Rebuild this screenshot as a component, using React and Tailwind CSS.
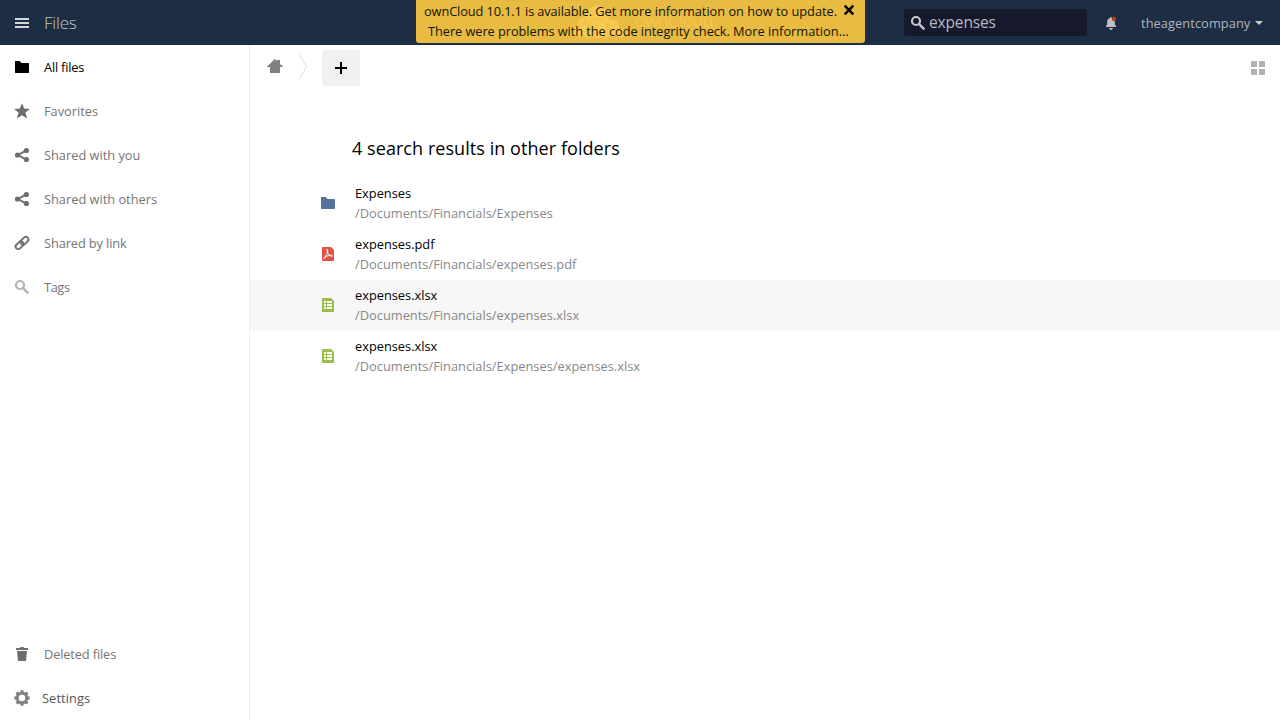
import React from "react";

const Icon = ({ className = "", children }) => (
  <svg viewBox="0 0 16 16" width="16" height="16" className={`block shrink-0 ${className}`}>
    {children}
  </svg>
);

const Folder = ({ className }) => (
  <Icon className={className}>
    <path fill="currentColor" d="M1.4 2h4.3l1.8 2h7.1q.4 0 .4.4v9.2q0 .4-.4.4H1.4q-.4 0-.4-.4V2.4q0-.4.4-.4z" />
  </Icon>
);

const Star = () => (
  <Icon className="text-[#6e6e6e]">
    <path fill="currentColor" d="M8 .3l2.200 5.300 5.800.3-4.600 3.700 1.800 5.900L8 12.200l-5.200 3.300 1.800-5.900L0 5.900l5.800-.3z" />
  </Icon>
);

const Share = () => (
  <Icon className="text-[#6e6e6e]">
    <path d="M12.300 3.400L4 8l8.300 4.600" fill="none" stroke="currentColor" strokeWidth="2" />
    <circle cx="3.500" cy="8" r="2.600" fill="currentColor" />
    <circle cx="12.400" cy="3.500" r="2.600" fill="currentColor" />
    <circle cx="12.400" cy="12.500" r="2.600" fill="currentColor" />
  </Icon>
);

const Link = () => (
  <Icon className="text-[#6e6e6e]">
    <g fill="none" stroke="currentColor" strokeWidth="1.900">
      <rect x="6.100" y="3.100" width="8.800" height="5.200" rx="2.600" transform="rotate(-45 10.500 5.700)" />
      <rect x="1.100" y="7.700" width="8.800" height="5.200" rx="2.600" transform="rotate(-45 5.500 10.300)" />
    </g>
  </Icon>
);

const Search = ({ className }) => (
  <Icon className={className}>
    <circle cx="6" cy="6" r="4" fill="none" stroke="currentColor" strokeWidth="2.200" />
    <path d="M8.800 8.800l5.500 5.500" stroke="currentColor" strokeWidth="2.500" />
  </Icon>
);

const Trash = () => (
  <Icon className="text-[#6e6e6e]">
    <path fill="currentColor" d="M6.500 1h3l.6 1h3.400q.5 0 .5.5V4H2V2.500q0-.5.500-.5h3.400zM3 5h10l-.9 9.200q-.1.800-.9.800H4.800q-.8 0-.9-.800z" />
  </Icon>
);

const Gear = () => (
  <Icon className="text-[#808080]">
    <g fill="currentColor">
      <path fillRule="evenodd" d="M8 1.800a6.200 6.200 0 1 1 0 12.400A6.200 6.200 0 0 1 8 1.800zm0 2.900a3.300 3.300 0 1 0 0 6.600 3.300 3.300 0 0 0 0-6.600z" />
      {[0, 45, 90, 135, 180, 225, 270, 315].map((a) => (
        <path key={a} d="M6.500.3h3l.3 2.500H6.200z" transform={`rotate(${a} 8 8)`} />
      ))}
    </g>
  </Icon>
);

const Home = () => (
  <Icon className="text-[#808080]">
    <path fill="currentColor" d="M8 1L0 8.500V9h3v6h10V9h3v-.5L13 6V2h-3v1z" />
  </Icon>
);

const Pdf = () => (
  <Icon>
    <path fill="#de5449" d="M2.400 1h8.600l3 3v10.600q0 .4-.4.4H2.400q-.4 0-.4-.4V1.400q0-.4.4-.4z" />
    <path fill="none" stroke="#fff" strokeWidth="1" d="M7.200 3.400c1 .4.600 2.500-.5 5C5.500 11 4.200 13 3.700 12.600c-.6-.6 1.800-2.200 4.600-2.900s4.200-.4 4.100.3c-.1.800-2-.1-3.400-1.400C7.400 7 6.300 3.600 7.200 3.400z" />
  </Icon>
);

const Sheet = () => (
  <Icon>
    <path fill="#9abd4e" d="M2.400 1H11l3 3v10.600q0 .4-.4.4H2.400q-.4 0-.4-.4V1.400q0-.4.4-.4z" />
    <path fill="#fff" d="M4 4h2v2H4zM7 4h5v2H7zM4 7h2v2H4zM7 7h5v2H7zM4 10h2v2H4zM7 10h5v2H7z" />
  </Icon>
);

const nav = [
  ["All files", <Folder className="text-black" />, "text-black tracking-[-0.2px]"],
  ["Favorites", <Star />, "text-[#757575]"],
  ["Shared with you", <Share />, "text-[#757575]"],
  ["Shared with others", <Share />, "text-[#757575]"],
  ["Shared by link", <Link />, "text-[#757575] tracking-[-0.1px]"],
  ["Tags", <Search className="text-[#b2b2b2]" />, "text-[#757575] tracking-[-0.4px]"],
];

const results = [
  ["Expenses", "/Documents/Financials/Expenses", <Folder className="text-[#54729b]" />, ""],
  ["expenses.pdf", "/Documents/Financials/expenses.pdf", <Pdf />, ""],
  ["expenses.xlsx", "/Documents/Financials/expenses.xlsx", <Sheet />, "bg-[#f7f7f7]"],
  ["expenses.xlsx", "/Documents/Financials/Expenses/expenses.xlsx", <Sheet />, ""],
];

function NavItem({ label, icon, color }) {
  return (
    <li className={`flex h-11 items-center gap-3.5 pl-3.5 ${color}`}>
      {icon}
      <span>{label}</span>
    </li>
  );
}

function Header() {
  return (
    <header className="relative flex h-[45px] shrink-0 items-center justify-between bg-[#1d2d44]">
      <div className="flex items-center gap-3.5 pl-3.5">
        <Icon className="text-[#d2d6da]">
          <path fill="currentColor" d="M1 3h14v2H1zM1 7h14v2H1zM1 11h14v2H1z" />
        </Icon>
        <span className="text-[17px] leading-6 font-light tracking-[-0.2px] text-[#c0c5cc]">Files</span>
      </div>

      <div className="flex items-center">
        <div className="flex h-[27px] w-[183px] items-center gap-[3px] rounded-[3px] bg-[#15192b] pl-1.5">
          <Search className="text-[#c4c6cc]" />
          <span className="-mt-0.5 text-[15.5px] leading-5 tracking-[-0.15px] text-[#b7b9c0]">expenses</span>
        </div>
        <svg viewBox="0 0 16 16" width="16" height="16" className="ml-4 block">
          <path fill="#bbc0c7" d="M8 2q.8 0 .800.900 3 .700 3 4.200v2q0 .900 1.200 1.900v1H3v-1q1.200-1 1.200-1.900v-2q0-3.500 3-4.200Q7.200 2 8 2zM6 13h4q-.4 2-2 2t-2-2z" />
          <circle cx="11" cy="4" r="2.200" fill="#c03d12" />
        </svg>
        <span className="ml-[22px] w-[110px] whitespace-nowrap text-[#b0b4bb] tracking-[0.08px]">theagentcompany</span>
        <svg viewBox="0 0 8 4" width="8" height="4" className="mr-[17px] ml-1 block">
          <path fill="#c7cbd1" d="M0 0h8L4 4z" />
        </svg>
      </div>

      <div className="absolute top-0 left-[416px] h-[43px] w-[449px] overflow-hidden rounded-b-[3px] bg-[#e8bb43]">
        <div className="absolute top-[5px] left-[155px] flex items-center gap-2 text-[#f7c951]">
          <svg viewBox="0 0 56 34" width="56" height="34" className="block">
            <g fill="currentColor" stroke="#e8bb43" strokeWidth="0.600">
              <circle cx="14" cy="19" r="7.500" />
              <circle cx="6" cy="27" r="5.500" />
              <circle cx="49.500" cy="28" r="5" />
              <circle cx="40" cy="22.500" r="8.500" />
              <circle cx="26" cy="13" r="12.500" />
              <circle cx="17" cy="25" r="8" />
              <circle cx="36" cy="26" r="6.500" />
              <circle cx="27" cy="23.500" r="10" />
            </g>
          </svg>
          <span className="-mt-1 text-[18px] leading-6 font-light tracking-[-0.4px]">ownCloud</span>
        </div>
        <div className="relative flex flex-col pt-px pl-2 leading-5 whitespace-nowrap text-[#151507]">
          <div className="flex">
            <span>
              <span className="tracking-[-0.11px]">ownCloud 10.1.1 is available. </span>
              <span className="tracking-[-0.02px]">Get more information on how to update.</span>
            </span>
            <svg viewBox="0 0 12 12" width="12" height="12" className="mt-[3px] ml-1.5 block">
              <path d="M1.700 1.700l8.600 8.600M10.300 1.700l-8.600 8.600" stroke="#000" strokeWidth="2.500" />
            </svg>
          </div>
          <span className="pl-1">
            <span className="tracking-[-0.06px]">There were problems with the code integrity check. </span>
            <span>More information</span>
            <span className="tracking-[0.5px]">…</span>
          </span>
        </div>
      </div>
    </header>
  );
}

export default function App() {
  return (
    <div className="flex h-[720px] w-[1280px] flex-col overflow-hidden bg-white font-['Open_Sans',sans-serif] text-[12.8px] leading-5 text-black">
      <Header />
      <div className="flex min-h-0 flex-1">
        <aside className="flex w-[250px] shrink-0 flex-col justify-between border-r border-[#eeeeee]">
          <ul>
            {nav.map(([label, icon, color]) => (
              <NavItem key={label} label={label} icon={icon} color={color} />
            ))}
          </ul>
          <div>
            <ul>
              <NavItem label="Deleted files" icon={<Trash />} color="text-[#757575] tracking-[-0.13px]" />
            </ul>
            <button className="flex h-11 items-center gap-3 pl-3.5 text-[#555555]">
              <Gear />
              <span className="tracking-[0.1px]">Settings</span>
            </button>
          </div>
        </aside>

        <main className="flex-1">
          <div className="flex h-11 items-start pt-[5px] pr-3.5">
            <span className="mt-2 ml-[17px]">
              <Home />
            </span>
            <svg viewBox="0 0 10 26" width="10" height="26" className="mt-1 ml-[15px] block">
              <path d="M1 .5l7.500 12.500L1 25.500" fill="none" stroke="#dddddd" />
            </svg>
            <button className="ml-3.5 flex h-9 w-[38px] items-center justify-center rounded-[3px] bg-[#f0f0f0]">
              <svg viewBox="0 0 12 12" width="12" height="12">
                <path d="M5 0h2v5h5v2H7v5H5V7H0V5h5z" />
              </svg>
            </button>
            <svg viewBox="0 0 16 16" width="16" height="16" className="mt-2.5 ml-auto block">
              <path fill="#b2b2b2" d="M1 1h6v6H1zM9 1h6v6H9zM1 9h6v6H1zM9 9h6v6H9z" />
            </svg>
          </div>
          <h2 className="mt-[47px] ml-[102px] text-[18px] leading-6 tracking-[0.06px]">4 search results in other folders</h2>
          <ul className="mt-[18px]">
            {results.map(([name, path, icon, bg]) => (
              <li key={path} className={`flex h-[51px] items-start gap-[19px] pt-[5px] pl-[70px] ${bg}`}>
                <span className="mt-3">{icon}</span>
                <div>
                  <div>{name}</div>
                  <div className="tracking-[0.025px] text-[#888888]">{path}</div>
                </div>
              </li>
            ))}
          </ul>
        </main>
      </div>
    </div>
  );
}
